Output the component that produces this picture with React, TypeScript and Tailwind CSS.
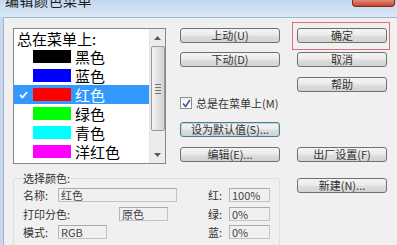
import React from 'react';

const colors = [
  { name: '黑色', swatch: 'bg-[#000000]' },
  { name: '蓝色', swatch: 'bg-[#0000ff]' },
  { name: '红色', swatch: 'bg-[#ff0000]', selected: true },
  { name: '绿色', swatch: 'bg-[#00ff00]' },
  { name: '青色', swatch: 'bg-[#00ffff]' },
  { name: '洋红色', swatch: 'bg-[#ff00ff]' },
  { name: '黄色', swatch: 'bg-[#ffff00]' },
];

const Btn = ({ label, className = '' }: { label: string; className?: string }) => (
  <div
    className={`h-[15px] flex items-center justify-center rounded-[3px] border border-[#707070] bg-[linear-gradient(#f4f4f4,#ececec_45%,#dedede_55%,#d2d2d2)] text-[11px] leading-none text-[#333] ${className}`}
  >
    {label}
  </div>
);

const Field = ({ value, className = '' }: { value: string; className?: string }) => (
  <div
    className={`h-[14px] flex items-center pl-[2px] border border-[#c3c3c3] border-t-[#a9a9a9] border-l-[#b5b5b5] bg-[#f0f0f0] text-[11px] leading-none text-[#444] ${className}`}
  >
    {value}
  </div>
);

const Arrow = ({ up }: { up?: boolean }) => (
  <svg width="7" height="4" viewBox="0 0 7 4">
    <path d={up ? 'M0 4 L3.5 0 L7 4 Z' : 'M0 0 L3.5 4 L7 0 Z'} fill="#5a5a5a" />
  </svg>
);

export default function App() {
  return (
    <div className="w-[397px] h-[245px] overflow-hidden flex flex-col bg-[#c6d9ee] font-['Noto_Sans_CJK_SC',sans-serif] text-[#333]">
      {/* title bar */}
      <div className="h-[17px] shrink-0 flex justify-between bg-[linear-gradient(#c3d8ef,#dbe8f6)]">
        <div className="-mt-[8px] pl-[5px] text-[14px] leading-[16px] text-[#1a1a1a] tracking-[0.5px]">编辑颜色菜单</div>
        <div className="w-[43px] h-[7px] mr-[2px] rounded-b-[4px] border border-t-0 border-[#7a2a20] bg-[linear-gradient(#e08a74,#c8452f)]" />
      </div>

      {/* client area */}
      <div className="flex-1 ml-[3px] border-l border-t border-[#9fb3cb] bg-[#f0f0f0] flex">
        {/* left part */}
        <div className="pl-[9px] pt-[10px] flex flex-col">
          <div className="flex">
            {/* list box */}
            <div className="w-[153px] h-[136px] border border-[#828790] bg-white flex overflow-hidden">
              <div className="flex-1 flex flex-col overflow-hidden">
                <div className="h-[18px] shrink-0 flex items-center pl-[3px] text-[15px] leading-none text-black">总在菜单上:</div>
                {colors.map((c) => (
                  <div
                    key={c.name}
                    className={`h-[19px] shrink-0 flex items-center ${c.selected ? 'bg-[#3399ff] text-white' : 'text-black'}`}
                  >
                    <div className="w-[18px] flex justify-center">
                      {c.selected && (
                        <svg width="9" height="8" viewBox="0 0 9 8">
                          <path d="M1 4 L3.5 6.5 L8 1" stroke="white" strokeWidth="1.8" fill="none" />
                        </svg>
                      )}
                    </div>
                    <div className={`w-[38px] h-[13px] ml-[1px] ${c.swatch}`} />
                    <span className="ml-[4px] text-[15px] leading-none">{c.name}</span>
                  </div>
                ))}
              </div>
              {/* scrollbar */}
              <div className="w-[16px] shrink-0 flex flex-col items-center bg-[#ececec] border-l border-[#e3e3e3]">
                <div className="h-[17px] flex items-center justify-center">
                  <Arrow up />
                </div>
                <div className="w-[14px] h-[85px] rounded-[2px] border border-[#9a9a9a] bg-[linear-gradient(90deg,#f3f3f3,#e2e2e2_50%,#d3d3d3)] flex flex-col items-center justify-center gap-[2px]">
                  <div className="w-[6px] h-px bg-[#777]" />
                  <div className="w-[6px] h-px bg-[#777]" />
                  <div className="w-[6px] h-px bg-[#777]" />
                  <div className="w-[6px] h-px bg-[#777]" />
                </div>
                <div className="flex-1" />
                <div className="h-[17px] flex items-center justify-center">
                  <Arrow />
                </div>
              </div>
            </div>

            {/* middle column */}
            <div className="ml-[14px] w-[100px] flex flex-col">
              <Btn label="上动(U)" />
              <Btn label="下动(D)" className="mt-[9px]" />
              <div className="mt-[30px] h-[12px] flex items-center">
                <div className="w-[12px] h-[12px] border border-[#8e8f8f] bg-[linear-gradient(#f4f4f4,#ffffff)] flex items-center justify-center">
                  <svg width="9" height="9" viewBox="0 0 9 9">
                    <path d="M1 4.5 L3.5 7.5 L8 1" stroke="#3f56a0" strokeWidth="1.6" fill="none" />
                  </svg>
                </div>
                <span className="ml-[4px] text-[11px] leading-none text-[#333]">总是在菜单上(M)</span>
              </div>
              <Btn
                label="设为默认值(S)..."
                className="mt-[13px] border-[#3c7fb1] bg-[linear-gradient(#eaf6fd,#d9f0fc_45%,#bee6fd_55%,#a7d9f5)] shadow-[inset_0_0_0_1px_#9fe0fb]"
              />
              <Btn label="编辑(E)..." className="mt-[10px]" />
            </div>
          </div>

          {/* group box */}
          <fieldset className="mt-[7px] w-[267px] h-[90px] border border-[#d5dfe5] rounded-[3px] pl-[9px]">
            <legend className="ml-[-1px] px-[1px] text-[11px] leading-[14px] text-[#333]">选择颜色:</legend>
            <div className="pt-[3px] flex flex-col">
              <div className="h-[14px] flex items-center">
                <div className="w-[185px] flex items-center">
                  <span className="w-[35px] text-[11px] leading-none">名称:</span>
                  <Field value="红色" className="w-[119px]" />
                </div>
                <span className="w-[21px] text-[11px] leading-none">红:</span>
                <Field value="100%" className="w-[41px]" />
              </div>
              <div className="mt-[5px] h-[14px] flex items-center">
                <div className="w-[185px] flex items-center">
                  <span className="w-[96px] text-[11px] leading-none">打印分色:</span>
                  <Field value="原色" className="w-[49px]" />
                </div>
                <span className="w-[21px] text-[11px] leading-none">绿:</span>
                <Field value="0%" className="w-[41px]" />
              </div>
              <div className="mt-[4px] h-[14px] flex items-center">
                <div className="w-[185px] flex items-center">
                  <span className="w-[35px] text-[11px] leading-none">模式:</span>
                  <Field value="RGB" className="w-[49px]" />
                </div>
                <span className="w-[21px] text-[11px] leading-none">蓝:</span>
                <Field value="0%" className="w-[41px]" />
              </div>
            </div>
          </fieldset>
        </div>

        {/* right column */}
        <div className="ml-[17px] pt-[10px] w-[90px] flex flex-col">
          <div className="relative">
            <Btn label="确定" />
            <span className="absolute -left-[5px] -right-[3px] -top-[6px] -bottom-[7px] border border-[#d9707c] pointer-events-none" />
          </div>
          <Btn label="取消" className="mt-[9px]" />
          <Btn label="帮助" className="mt-[10px]" />
          <Btn label="出厂设置(F)" className="mt-[55px]" />
          <Btn label="新建(N)..." className="mt-[16px]" />
        </div>
      </div>
    </div>
  );
}
